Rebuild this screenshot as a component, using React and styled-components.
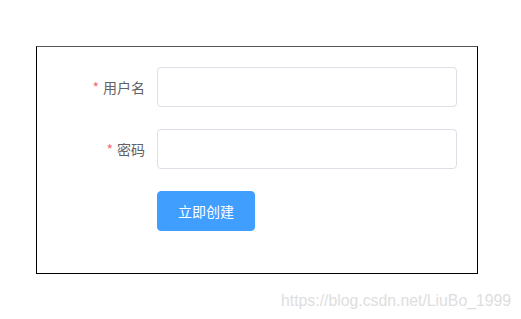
import React from "react";
import styled, { createGlobalStyle } from "styled-components";

const Global = createGlobalStyle`
  html, body { margin: 0; padding: 0; background: #fff; }
  body { font-family: "Noto Sans CJK SC", "Microsoft YaHei", sans-serif; }
  * { box-sizing: border-box; }
`;

const Page = styled.div`
  position: relative;
  width: 521px;
  height: 319px;
  padding: 46px 0 0 36px;
`;

const Box = styled.form`
  width: 442px;
  height: 228px;
  border: 1px solid #000;
  border-top-color: #555;
  padding: 20px 20px 20px 20px;
  display: flex;
  flex-direction: column;
  gap: 22px;
`;

const Row = styled.div`
  display: flex;
  align-items: center;
  height: 40px;
`;

const Label = styled.label`
  width: 100px;
  flex: none;
  padding-right: 12px;
  text-align: right;
  font-size: 14px;
  line-height: 40px;
  color: #606266;
`;

const Star = styled.span`
  color: #f56c6c;
  margin-right: 4px;
`;

const Input = styled.input`
  width: 300px;
  height: 40px;
  border: 1px solid #dcdfe6;
  border-radius: 4px;
  padding: 0 15px;
  font-size: 14px;
  outline: none;
  background: #fff;
`;

const Content = styled.div`
  margin-left: ${(p) => (p.$offset ? "100px" : "0")};
`;

const Button = styled.button`
  height: 40px;
  width: 98px;
  padding: 0;
  border: 1px solid #409eff;
  background: #409eff;
  color: #fff;
  border-radius: 4px;
  font-size: 14px;
  font-family: "Noto Sans CJK SC", sans-serif;
  cursor: pointer;
`;

const Watermark = styled.div`
  position: absolute;
  left: 281px;
  top: 292px;
  font-family: "Liberation Sans", Arial, sans-serif;
  font-size: 15.8px;
  color: #dedede;
  white-space: nowrap;
`;

export default function App() {
  return (
    <>
      <Global />
      <Page>
        <Box onSubmit={(e) => e.preventDefault()}>
          <Row>
            <Label>
              <Star>*</Star>用户名
            </Label>
            <Input />
          </Row>
          <Row>
            <Label>
              <Star>*</Star>密码
            </Label>
            <Input type="password" />
          </Row>
          <Row>
            <Content $offset>
              <Button type="submit">立即创建</Button>
            </Content>
          </Row>
        </Box>
        <Watermark>https://blog.csdn.net/LiuBo_1999</Watermark>
      </Page>
    </>
  );
}
